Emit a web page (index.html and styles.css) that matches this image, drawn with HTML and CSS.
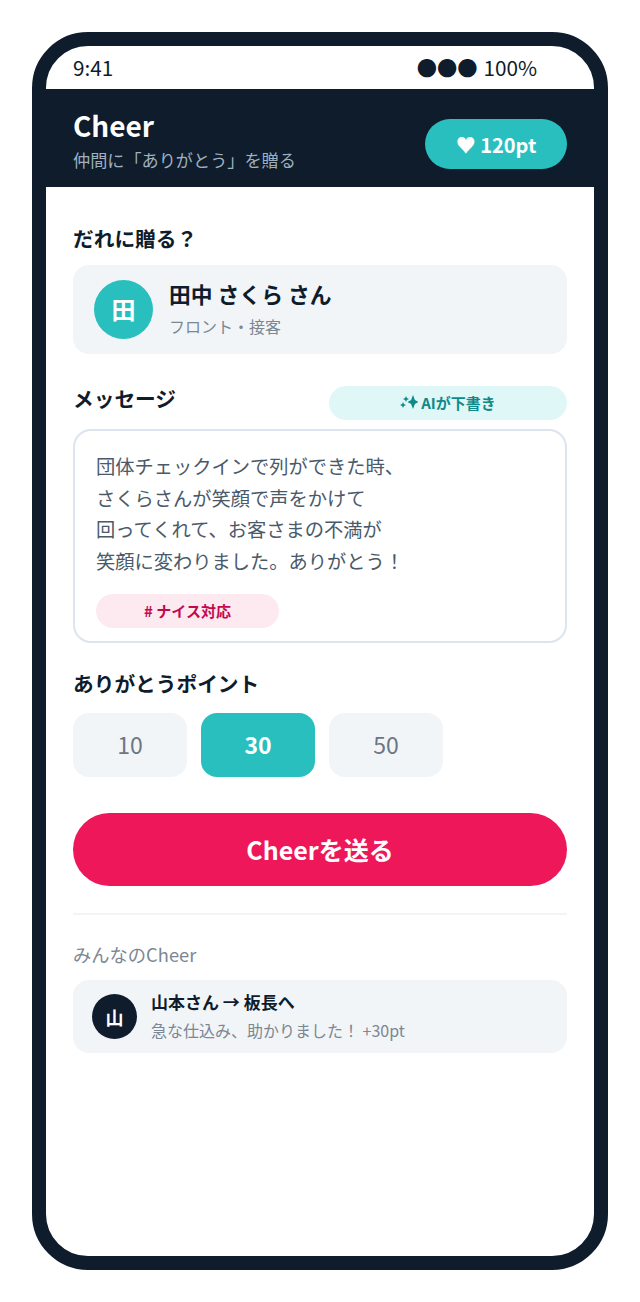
FILE: index.html
```html
<!DOCTYPE html>
<html lang="ja">
<head>
<meta charset="UTF-8">
<meta name="viewport" content="width=device-width, initial-scale=1.0">
<title>Cheer</title>
<link rel="stylesheet" href="styles.css">
</head>
<body>
<div class="phone">
    <div class="status-bar">
        <span>9:41</span>
        <span class="status-right"><span class="dots">●●●</span> 100%</span>
    </div>
    <header class="app-header">
        <div>
            <h1>Cheer</h1>
            <p>仲間に「ありがとう」を贈る</p>
        </div>
        <div class="points-badge">♥ 120pt</div>
    </header>
    <main class="content">
        <h2 class="label to-label">だれに贈る？</h2>
        <div class="recipient">
            <div class="avatar">田</div>
            <div class="recipient-body">
                <div class="recipient-name">田中 さくら さん</div>
                <div class="recipient-role">フロント・接客</div>
            </div>
        </div>

        <div class="message-head">
            <h2 class="label">メッセージ</h2>
            <button class="ai-btn">
                <svg class="sparkle" viewBox="0 0 18 18" width="18" height="18" fill="currentColor">
                    <path d="M13 1 L14.9 6.1 L18.5 8 L14.9 9.9 L13 15 L11.1 9.9 L7.5 8 L11.1 6.1 Z"/>
                    <path d="M6 2 L6.9 4.1 L9 5 L6.9 5.9 L6 8 L5.1 5.9 L3 5 L5.1 4.1 Z"/>
                    <path d="M3 8 L3.9 10.1 L6 11 L3.9 11.9 L3 14 L2.1 11.9 L0 11 L2.1 10.1 Z"/>
                </svg>
                <span>AIが下書き</span>
            </button>
        </div>
        <div class="message-box">
            <p>団体チェックインで列ができた時、<br>さくらさんが笑顔で声をかけて<br>回ってくれて、お客さまの不満が<br>笑顔に変わりました。ありがとう！</p>
            <span class="tag"># ナイス対応</span>
        </div>

        <h2 class="label points-label">ありがとうポイント</h2>
        <div class="points">
            <button class="point">10</button>
            <button class="point active">30</button>
            <button class="point">50</button>
        </div>

        <button class="send-btn">Cheerを送る</button>
        <hr class="divider">

        <div class="feed-title">みんなのCheer</div>
        <div class="feed-item">
            <div class="feed-avatar">山</div>
            <div class="feed-body">
                <div class="feed-name">山本さん → 板長へ</div>
                <div class="feed-text">急な仕込み、助かりました！ +30pt</div>
            </div>
        </div>
    </main>
</div>
</body>
</html>
```

FILE: styles.css
```css
* {
    box-sizing: border-box;
}
body {
    margin: 0;
    padding: 32px;
    background-color: #fff;
    font-family: 'Noto Sans CJK JP', sans-serif;
    color: #0e1c2c;
}
h1, h2, p {
    margin: 0;
}
button {
    font-family: inherit;
    border: none;
    padding: 0;
}
.phone {
    width: 576px;
    height: 1238px;
    border: 14px solid #0e1c2c;
    border-radius: 56px;
    background-color: #fff;
    overflow: hidden;
}
.status-bar {
    height: 43px;
    padding: 0 57px 2px 27px;
    display: flex;
    justify-content: space-between;
    align-items: center;
    font-size: 20.7px;
}
.status-right {
    display: flex;
    align-items: center;
    gap: 6px;
}
.dots {
    font-size: 20.3px;
}
.app-header {
    height: 98px;
    padding: 18px 27px 0;
    background-color: #0e1c2c;
    display: flex;
    justify-content: space-between;
    align-items: flex-start;
}
.app-header h1 {
    font-size: 28px;
    line-height: 36px;
    font-weight: 700;
    color: #fff;
}
.app-header p {
    margin-top: 4px;
    font-size: 17.15px;
    line-height: 26px;
    color: #9fb0bf;
}
.points-badge {
    margin-top: 12px;
    width: 142px;
    height: 50px;
    border-radius: 25px;
    background-color: #2abfbf;
    color: #fff;
    font-size: 20px;
    font-weight: 700;
    display: flex;
    align-items: center;
    justify-content: center;
}
.content {
    padding: 0 27px;
}
.label {
    font-size: 20.7px;
    line-height: 28px;
    font-weight: 700;
}
.to-label {
    margin-top: 37px;
}
.recipient {
    margin-top: 13px;
    height: 89px;
    padding: 0 21px;
    border-radius: 16px;
    background-color: #f2f5f8;
    display: flex;
    align-items: center;
    gap: 16px;
}
.avatar {
    width: 59px;
    height: 59px;
    padding-bottom: 2px;
    border-radius: 50%;
    background-color: #2abfbf;
    color: #fff;
    font-size: 24px;
    font-weight: 700;
    display: flex;
    align-items: center;
    justify-content: center;
}
.recipient-body {
    margin-bottom: 2px;
}
.recipient-name {
    font-size: 21.8px;
    line-height: 30px;
    font-weight: 700;
}
.recipient-role {
    margin-top: 5px;
    font-size: 16px;
    line-height: 24px;
    color: #7b8794;
}
.message-head {
    margin-top: 32px;
    display: flex;
    justify-content: space-between;
    align-items: flex-start;
}
.message-head .label {
    margin-top: -2px;
}
.ai-btn {
    width: 238px;
    height: 34px;
    padding-bottom: 2px;
    border-radius: 17px;
    background-color: #e0f7f7;
    color: #0f8a8a;
    font-size: 15px;
    font-weight: 700;
    display: flex;
    align-items: center;
    justify-content: center;
    gap: 3px;
}
.sparkle {
    margin-top: 2px;
}
.message-box {
    margin-top: 9px;
    height: 214px;
    padding: 20px 21px 0;
    border: 2px solid #dce4ef;
    border-radius: 18px;
}
.message-box p {
    font-size: 19.25px;
    line-height: 31.7px;
    color: #4a5a6a;
}
.tag {
    display: block;
    margin-top: 16px;
    width: 183px;
    height: 34px;
    line-height: 34px;
    border-radius: 17px;
    background-color: #fdeaf1;
    color: #c4084f;
    font-size: 15px;
    font-weight: 700;
    text-align: center;
}
.points-label {
    margin-top: 26px;
}
.points {
    margin-top: 16px;
    display: flex;
    gap: 14px;
}
.point {
    width: 114px;
    height: 64px;
    padding-bottom: 2px;
    border-radius: 16px;
    background-color: #f2f5f8;
    color: #6b7785;
    font-size: 23px;
}
.point.active {
    background-color: #2abfbf;
    color: #fff;
    font-weight: 700;
}
.send-btn {
    display: block;
    margin-top: 36px;
    width: 100%;
    height: 73px;
    padding-bottom: 2px;
    border-radius: 37px;
    background-color: #ee175a;
    color: #fff;
    font-size: 25px;
    font-weight: 700;
}
.divider {
    margin: 27px 0 0;
    border: none;
    height: 2px;
    background-color: #f2f5f8;
}
.feed-title {
    margin-top: 25px;
    font-size: 18.3px;
    line-height: 28px;
    color: #7b8794;
}
.feed-item {
    margin-top: 12px;
    height: 73px;
    padding: 0 19px;
    border-radius: 16px;
    background-color: #f2f5f8;
    display: flex;
    align-items: center;
    gap: 14px;
}
.feed-avatar {
    width: 45px;
    height: 45px;
    border-radius: 50%;
    background-color: #0e1c2c;
    color: #fff;
    font-size: 18px;
    font-weight: 700;
    display: flex;
    align-items: center;
    justify-content: center;
}
.feed-body {
    margin-bottom: 2px;
}
.feed-name {
    margin-bottom: 2px;
    font-size: 17px;
    line-height: 26px;
    font-weight: 700;
}
.feed-text {
    font-size: 16px;
    line-height: 26px;
    color: #7b8794;
}
```
